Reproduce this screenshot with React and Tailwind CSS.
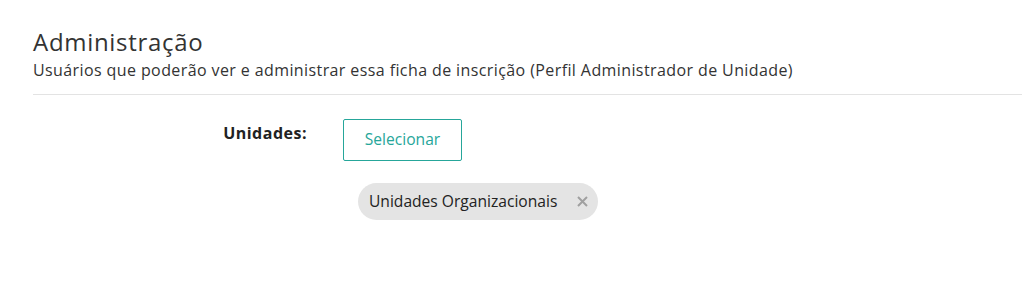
import React, { useState } from "react";

const App = () => {
  const [units, setUnits] = useState(["Unidades Organizacionais"]);

  return (
    <div className="min-h-screen bg-white font-['Open_Sans',sans-serif] text-[#333]">
      <div className="pl-[33px] pr-[2px] pt-[26px]">
        <h2 className="text-[24px] leading-[32px] tracking-[0.7px] text-[#333]">Administração</h2>
        <p className="text-[16px] leading-[24px] tracking-[0.4px] text-[#333]">
          Usuários que poderão ver e administrar essa ficha de inscrição (Perfil Administrador de Unidade)
        </p>
        <div className="mt-[12px] border-b border-[#e3e3e3]" />

        <div className="mt-[24px] flex">
          <label className="w-[274px] shrink-0 pt-[2px] text-right text-[16px] leading-[24px] font-bold tracking-[0.5px] text-[#222]">
            Unidades:
          </label>
          <div className="ml-[36px] flex flex-col items-start">
            <button
              type="button"
              className="h-[42px] w-[119px] rounded-[2px] border border-[#26a69a] text-[15.6px] text-[#26a69a]"
            >
              Selecionar
            </button>
            <div className="ml-[15px] mt-[22px] flex flex-wrap gap-2">
              {units.map((u) => (
                <span
                  key={u}
                  className="flex h-[37px] items-center rounded-full bg-[#e4e4e4] pl-[11px] pr-[6px] text-[15.6px] text-[#222]"
                >
                  {u}
                  <button
                    type="button"
                    onClick={() => setUnits(units.filter((x) => x !== u))}
                    className="ml-[15px] flex h-[20px] w-[20px] items-center justify-center"
                  >
                    <svg width="11" height="11" viewBox="0 0 11 11">
                      <path d="M1 1L10 10M10 1L1 10" stroke="#a0a0a0" strokeWidth="2" />
                    </svg>
                  </button>
                </span>
              ))}
            </div>
          </div>
        </div>
      </div>
    </div>
  );
};

export default App;
